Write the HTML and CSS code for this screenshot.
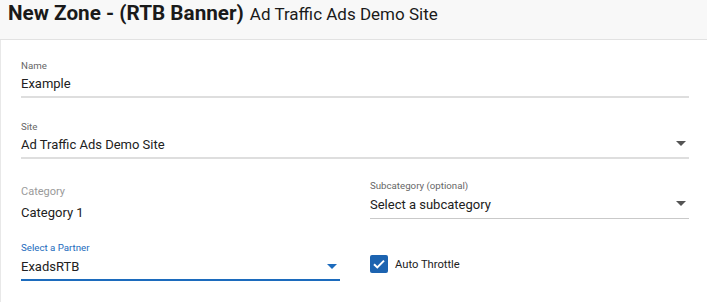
FILE: index.html
```html
<!DOCTYPE html>
<html>
<head>
<meta charset="utf-8">
<link rel="stylesheet" href="styles.css">
</head>
<body>
<header class="page-header">
  <h1 class="title">New Zone - (RTB Banner)</h1>
  <span class="subtitle">Ad Traffic Ads Demo Site</span>
</header>
<main class="form">
  <div class="field name-field">
    <label class="label">Name</label>
    <div class="control">Example</div>
  </div>
  <div class="field site-field">
    <label class="label">Site</label>
    <div class="control select">Ad Traffic Ads Demo Site<span class="caret"></span></div>
  </div>
  <div class="row row-category">
    <div class="field static">
      <label class="label muted">Category</label>
      <div class="control plain">Category 1</div>
    </div>
    <div class="field sub">
      <label class="label">Subcategory (optional)</label>
      <div class="control select">Select a subcategory<span class="caret"></span></div>
    </div>
  </div>
  <div class="row row-partner">
    <div class="field focused">
      <label class="label">Select a Partner</label>
      <div class="control select">ExadsRTB<span class="caret"></span></div>
    </div>
    <div class="check">
      <span class="box"><svg viewBox="0 0 18 18" width="18" height="18"><path d="M4 9.2l3.3 3.2L14 5.6" fill="none" stroke="#fff" stroke-width="2"/></svg></span>
      <span class="check-label">Auto Throttle</span>
    </div>
  </div>
</main>
</body>
</html>
```
FILE: styles.css
```css
html, body { margin: 0; padding: 0; background: #fff; }
body { font-family: Roboto, "Noto Sans", sans-serif; color: #212121; }
.page-header {
  height: 40px;
  background: #f8f8f8;
  border-bottom: 1px solid #e2e2e2;
  display: flex;
  align-items: baseline;
  padding: 0 8px;
  box-sizing: border-box;
}
.title { margin: 0; font-size: 20.7px; font-weight: 700; line-height: 27px; color: #1a1a1a; }
.subtitle { font-size: 17px; margin-left: 6px; color: #1a1a1a; }
.form {
  border-left: 1px solid #e8e8e8;
  padding: 20px 18px 20px 20px;
  min-height: 262px;
  box-sizing: border-box;
}
.field { display: flex; flex-direction: column; }
.label { font-size: 9.7px; color: #666; line-height: 12px; height: 12px; }
.control {
  font-size: 13px; line-height: 20px; padding: 2px 0 2px;
  border-bottom: 2px solid #dedede; position: relative;
}
.site-field { margin-top: 23px; }
.caret {
  position: absolute; right: 3px; top: 8px;
  width: 0; height: 0;
  border-left: 5px solid transparent; border-right: 5px solid transparent; border-top: 5px solid #555;
}
.row { display: grid; grid-template-columns: 1fr 1fr; column-gap: 30px; align-items: start; }
.row-category { margin-top: 21px; }
.row-partner { margin-top: 19px; }
.static .label { font-size: 11px; color: #9a9a9a; line-height: 14px; height: 14px; margin-top: 5px; }
.static .control.plain { border-bottom: none; padding: 4px 0 0; }
.sub .control { padding: 3px 0 3px; border-bottom: 1px solid #c9c9c9; }
.sub .caret { top: 9px; }
.focused .label { color: #1c6bbd; }
.focused .control { padding: 3px 0 2px; border-bottom: 2px solid #1c6bbd; }
.focused .caret { border-top-color: #1c6bbd; top: 10px; }
.check { display: flex; align-items: center; gap: 7px; margin-top: 13px; }
.box { width: 18px; height: 18px; background: #1c63b0; border-radius: 2px; display: block; }
.box svg { display: block; }
.check-label { font-size: 11.2px; color: #212121; }
```
